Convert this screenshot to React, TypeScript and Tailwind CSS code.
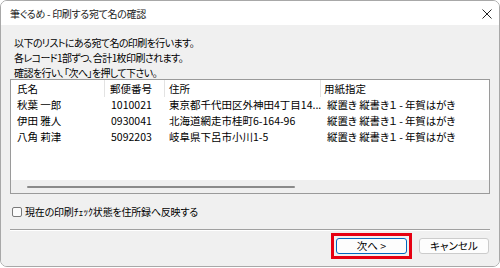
import React from "react";

const rows = [
  { name: "秋葉 一郎", zip: "1010021", addr: "東京都千代田区外神田4丁目14...", paper: "縦置き 縦書き１ - 年賀はがき" },
  { name: "伊田 雅人", zip: "0930041", addr: "北海道網走市桂町6-164-96", paper: "縦置き 縦書き１ - 年賀はがき" },
  { name: "八角 莉津", zip: "5092203", addr: "岐阜県下呂市小川1-5", paper: "縦置き 縦書き１ - 年賀はがき" },
];

const cols = "grid grid-cols-[94px_60px_156px_1fr]";

export default function App() {
  return (
    <div className="w-[500px] h-[268px] bg-white text-[10.5px] text-black [font-family:'Noto_Sans_CJK_JP',sans-serif] [font-feature-settings:'palt']">
      <div className="h-[267px] flex flex-col border border-[#a8a8a8] rounded-[7px] overflow-hidden">
        {/* Title bar */}
        <div className="h-[24px] shrink-0 bg-white flex items-center justify-between pl-[9px] pr-[7px]">
          <span className="text-[10px] tracking-[-0.3px] text-[#1b1b1b]">筆ぐるめ - 印刷する宛て名の確認</span>
          <svg width="10" height="10" viewBox="0 0 10 10" className="mt-[2px]">
            <path d="M0.5 0.5 L9.5 9.5 M9.5 0.5 L0.5 9.5" stroke="#222" strokeWidth="1" />
          </svg>
        </div>

        {/* Body */}
        <div className="flex-1 bg-[#f0f0f0] px-[9px] pt-[10px] flex flex-col">
          <div className="pl-[4px] leading-[15px] text-[10px] tracking-[-0.6px]">
            <p>以下のリストにある宛て名の印刷を行います。</p>
            <p>各レコード1部ずつ、合計1枚印刷されます。</p>
            <p>確認を行い、「次へ」を押して下さい。</p>
          </div>

          {/* List */}
          <div className="mt-[-1px] w-[480px] h-[115px] border border-[#9a9a9a] bg-white flex flex-col">
            <div className={`${cols} h-[17px] items-stretch`}>
              <div className="border-r border-[#e3e3e3] pl-[6px] flex items-center">氏名</div>
              <div className="border-r border-[#e3e3e3] pl-[5px] flex items-center">郵便番号</div>
              <div className="border-r border-[#e3e3e3] pl-[4px] flex items-center">住所</div>
              <div className="pl-[3px] flex items-center">用紙指定</div>
            </div>
            {rows.map((r) => (
              <div key={r.zip} className={`${cols} h-[16px] items-center`}>
                <div className="pl-[6px] whitespace-nowrap">{r.name}</div>
                <div className="pl-[6px]">{r.zip}</div>
                <div className="pl-[4px] whitespace-nowrap overflow-hidden">{r.addr}</div>
                <div className="pl-[6px] whitespace-pre tracking-[-0.1px]">{r.paper}</div>
              </div>
            ))}
            <div className="flex-1" />
            <div className="h-[13px] bg-[#efefef] flex items-center">
              <div className="ml-[16px] w-[268px] h-[2px] rounded-full bg-[#8a8a8a]" />
            </div>
          </div>

          {/* Checkbox */}
          <label className="mt-[10px] h-[15px] flex items-center gap-[3px] pl-[2px]">
            <span className="w-[10px] h-[10px] rounded-[2px] border border-[#7a7a7a] bg-[#fbfbfb]" />
            <span className="text-[10px] tracking-[-0.2px]">現在の印刷ﾁｪｯｸ状態を住所録へ反映する</span>
          </label>

          {/* Separator */}
          <div className="mt-[10px] w-[480px] border-t border-[#a0a0a0] border-b border-b-white" />

          {/* Buttons */}
          <div className="mt-[2px] flex items-center justify-end gap-[7px] pr-[1px]">
            <div className="border-[3px] border-[#e60012] p-[2px]">
              <button className="w-[71px] h-[16px] rounded-[3px] border border-[#0067c0] bg-[#fdfdfd] flex items-center justify-center leading-none">
                次へ &gt;
              </button>
            </div>
            <button className="w-[70px] h-[16px] rounded-[3px] border border-[#cccccc] bg-[#fdfdfd] flex items-center justify-center leading-none">
              キャンセル
            </button>
          </div>
        </div>
      </div>
    </div>
  );
}
